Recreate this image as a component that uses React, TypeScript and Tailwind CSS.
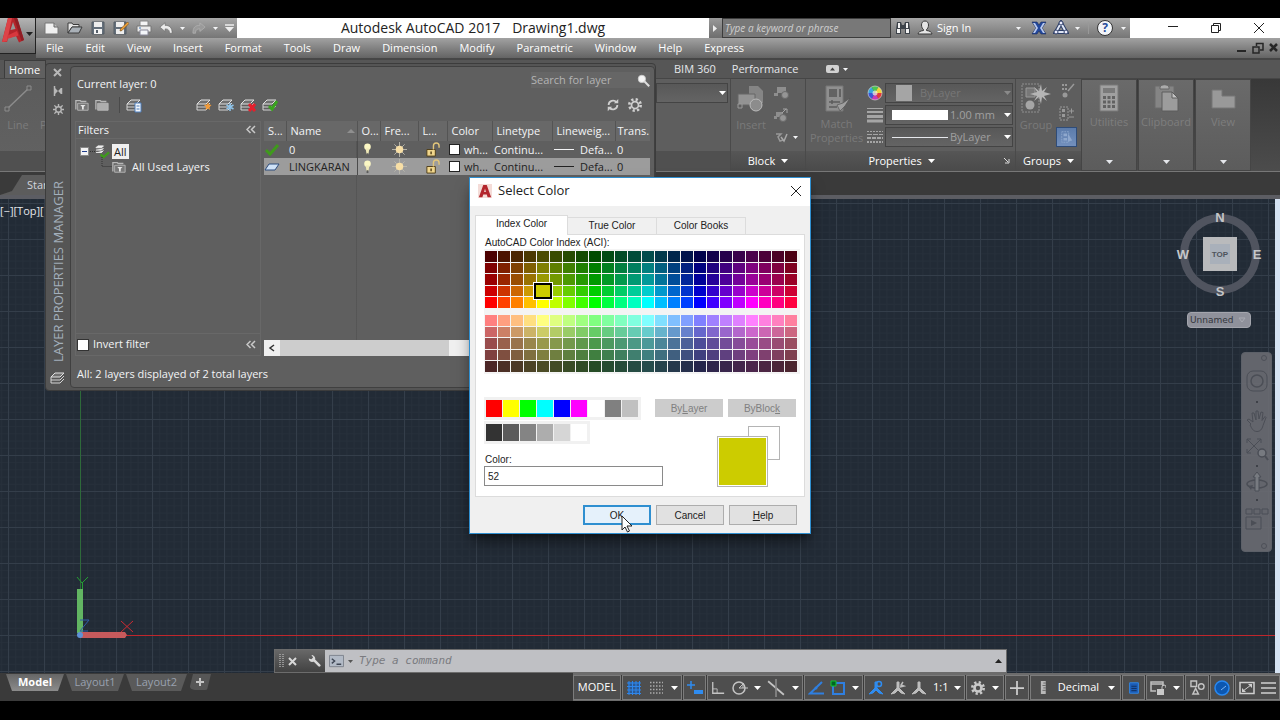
import { useState } from "react";
import type { ReactNode } from "react";
import clsx from "clsx";

const MENUS = [
	"File",
	"Edit",
	"View",
	"Insert",
	"Format",
	"Tools",
	"Draw",
	"Dimension",
	"Modify",
	"Parametric",
	"Window",
	"Help",
	"Express",
];

const LAYERS = [
	{ name: "0", current: true, color: "wh...", linetype: "Continu...", weight: "Defa...", trans: "0" },
	{ name: "LINGKARAN", current: false, color: "wh...", linetype: "Continu...", weight: "Defa...", trans: "0" },
];

const BASIC_COLORS = [
	"#ff0000",
	"#ffff00",
	"#00ff00",
	"#00ffff",
	"#0000ff",
	"#ff00ff",
	"#ffffff",
	"#808080",
	"#c0c0c0",
];

const GRAY_COLORS = ["#333333", "#5b5b5b", "#848484", "#adadad", "#d6d6d6", "#ffffff"];

// Brightness of each ACI shade, keyed by the last digit of the index
const SHADES = [255, 255, 204, 204, 153, 153, 127, 127, 76, 76];

// Color for an ACI index between 10 and 249. Odd indexes are the half saturated ones.
function aciColor(index: number) {
	const hue = (Math.floor(index / 10) - 1) * 15;
	const max = SHADES[index % 10];
	const min = index % 2 ? max / 2 : 0;
	const channel = (shift: number) => {
		const h = (hue + shift) % 360;
		let v = 0;
		if (h < 60 || h >= 300) v = 1;
		else if (h < 120) v = (120 - h) / 60;
		else if (h >= 240) v = (h - 240) / 60;
		return Math.round(min + (max - min) * v);
	};
	return `rgb(${channel(0)}, ${channel(240)}, ${channel(120)})`;
}

function Icon({
	size = 16,
	box = 16,
	className,
	children,
}: {
	size?: number;
	box?: number;
	className?: string;
	children: ReactNode;
}) {
	return (
		<svg
			width={size}
			height={size}
			viewBox={`0 0 ${box} ${box}`}
			fill="none"
			className={clsx("shrink-0", className)}
			aria-hidden="true"
		>
			{children}
		</svg>
	);
}

function Caret({ className = "text-white" }: { className?: string }) {
	return (
		<svg width="7" height="4" viewBox="0 0 7 4" className={clsx("shrink-0", className)} aria-hidden="true">
			<path d="M0 0h7L3.5 4z" fill="currentColor" />
		</svg>
	);
}

function SmallCaret() {
	return (
		<svg width="5" height="3" viewBox="0 0 5 3" className="shrink-0 text-gray-100" aria-hidden="true">
			<path d="M0 0h5L2.5 3z" fill="currentColor" />
		</svg>
	);
}

/* ---------- title bar and menu ---------- */

function AppLogo() {
	return (
		<svg width="26" height="26" viewBox="0 0 26 26" aria-hidden="true">
			<path d="M2 24 8 0h9l7 22-5 2.500-3-6.500-8 2-1 4z" fill="#b5242b" />
			<path d="M2 24 8 0h4L7 23.500z" fill="#dd4348" />
			<path d="m10.500 12 2.500-8 2.500 7z" fill="#979797" />
			<path d="M7.500 17.500 17 13l1.500 4.500L7 21z" fill="#d8383e" />
			<path d="m14 0 3.500.5L24 22l-2.500 1z" fill="#8f1d24" />
		</svg>
	);
}

function QuickAccess() {
	return (
		<div className="flex w-[201px] shrink-0 items-center gap-[7px] bg-linear-to-b from-[#a6a6a6] to-[#767676] pl-2">
			<button type="button" aria-label="New">
				<Icon>
					<path d="M1 3h9l4 4v7H1z" fill="#f0f0f0" stroke="#777" />
					<path d="M10 3v4h4" fill="#bbb" stroke="#666" />
				</Icon>
			</button>
			<button type="button" aria-label="Open">
				<Icon>
					<path d="M1 3h4l1 1.500h6V7H5l-4 6z" fill="#e5e5e5" stroke="#3c3c3c" />
					<path d="M5 7h10l-3 6H1z" fill="#a9b0b7" stroke="#3c3c3c" />
				</Icon>
			</button>
			<button type="button" aria-label="Save">
				<Icon>
					<path d="M2 2h12v12H2z" fill="#65707c" stroke="#555c65" />
					<path d="M4 2h8v5H4z" fill="#eee" />
					<path d="M4 9h8v5H4z" fill="#f4f4f4" />
					<path d="M6 10h2v3H6z" fill="#56606b" />
				</Icon>
			</button>
			<button type="button" aria-label="Save as">
				<Icon>
					<path d="M1 2h12v12H1z" fill="#65707c" stroke="#555c65" />
					<path d="M3 2h8v5H3zM3 9h8v5H3z" fill="#eee" />
					<path d="m14.500 2-7 7-.5 2 2-.5 7-7z" fill="#f2a33a" stroke="#6b430f" strokeWidth=".6" />
				</Icon>
			</button>
			<button type="button" aria-label="Plot">
				<Icon>
					<path d="M4 1h8v5H4z" fill="#f5f5f5" stroke="#888" />
					<path d="M1 6h14v6H1z" fill="#ececec" stroke="#777" />
					<path d="M4 10h8v5H4z" fill="#f3f6fa" stroke="#889" />
					<path d="M3 8h2" stroke="#3f74b5" />
				</Icon>
			</button>
			<button type="button" aria-label="Undo">
				<Icon size={14}>
					<path d="m1 7 6-5v3c5 0 8 2 8 9h-3c0-4-2-5-5-5v3z" fill="#ececec" stroke="#666" strokeWidth=".7" />
				</Icon>
			</button>
			<SmallCaret />
			<button type="button" aria-label="Redo">
				<Icon size={14}>
					<path d="M15 7 9 2v3C4 5 1 7 1 14h3c0-4 2-5 5-5v3z" fill="#9a9a9a" stroke="#b8b8b8" strokeWidth=".7" />
				</Icon>
			</button>
			<SmallCaret />
			<button type="button" aria-label="Customize toolbar">
				<Icon size={9} box={9}>
					<path d="M0 1h9" stroke="#eee" strokeWidth="1.500" />
					<path d="M0 3h9L4.500 8z" fill="#eee" />
				</Icon>
			</button>
		</div>
	);
}

function InfoCenter() {
	return (
		<>
			<button
				type="button"
				aria-label="Collapse search"
				className="flex w-[13px] shrink-0 items-center justify-center bg-linear-to-b from-[#9a9a9a] to-[#6e6e6e]"
			>
				<Icon size={7} box={7}>
					<path d="M1 0v7l4-3.500z" fill="#eee" />
				</Icon>
			</button>
			<input
				type="text"
				aria-label="Search"
				placeholder="Type a keyword or phrase"
				className="w-[169px] shrink-0 border border-[#3c3c3c] bg-[#787878] px-0.5 text-[10px] italic text-white placeholder:text-[#cfcfcf]"
			/>
			<div className="flex w-[239px] shrink-0 items-center bg-linear-to-b from-[#a6a6a6] to-[#767676] px-1 text-[11px] text-white">
				<button type="button" aria-label="Find">
					<Icon>
						<path d="M2 2h4l1 3h2l1-3h4l1 8v4h-5v-5H6v5H1v-4z" fill="#3d434a" />
						<path d="M2 9h3v4H2zM11 9h3v4h-3zM3 3h2v5H3zM11 3h2v5h-2z" fill="#f2f2f2" />
					</Icon>
				</button>
				<button type="button" className="ml-1.5 flex items-center gap-1">
					<Icon>
						<path
							d="M8 1c2.500 0 3.500 2 3.500 4S10.500 9 9.500 9.500v1c3 .5 5 1 5.500 3.500H1c.5-2.500 2.500-3 5.500-3.500v-1C5.500 9 4.500 7 4.500 5S5.500 1 8 1z"
							fill="#e6e6e6"
							stroke="#3a3a3a"
						/>
					</Icon>
					Sign In
				</button>
				<span className="ml-auto">
					<SmallCaret />
				</span>
				<button type="button" aria-label="Exchange apps" className="ml-2.5">
					<Icon>
						<path d="M1 2h5l2 3 2-3h5l-4 6 4 6h-5l-2-3-2 3H1l4-6z" fill="#22479c" stroke="#1b2d5c" strokeWidth=".6" />
						<path d="m2 3 3 5-3 5h2l3-5-3-5zM12 3l-3 5 3 5h2l-3-5 3-5z" fill="#b9c9ee" />
					</Icon>
				</button>
				<button type="button" aria-label="Autodesk 360" className="mx-1.5">
					<Icon>
						<path d="m8 3 5 9H3z" stroke="#2c3d66" strokeWidth="4" />
						<path d="m8 3 5 9H3z" stroke="#dfe6f5" strokeWidth="2" />
						<circle cx="8" cy="3" r="2" fill="#eef" stroke="#2c3d66" />
						<circle cx="3" cy="12" r="2" fill="#eef" stroke="#2c3d66" />
						<circle cx="13" cy="12" r="2" fill="#eef" stroke="#2c3d66" />
					</Icon>
				</button>
				<SmallCaret />
				<span className="mx-2 h-3 w-px bg-[#999]" />
				<button
					type="button"
					aria-label="Help"
					className="mr-2 flex size-4 items-center justify-center rounded-full border border-[#333] bg-[#f2f4f8] text-[12px] font-bold leading-none text-[#274b9b]"
				>
					?
				</button>
				<SmallCaret />
			</div>
		</>
	);
}

function WindowControls() {
	return (
		<div className="flex w-[150px] shrink-0 justify-end bg-white text-[#222]">
			<button type="button" aria-label="Minimize" className="flex w-[43px] items-center justify-center">
				<Icon size={12} box={12}>
					<path d="M1 4.500h10" stroke="currentColor" />
				</Icon>
			</button>
			<button type="button" aria-label="Restore" className="flex w-[43px] items-center justify-center">
				<Icon size={12} box={12}>
					<path d="M1.500 3.500h7v7h-7zM3.500 3V1.500h7v7H9" stroke="currentColor" />
				</Icon>
			</button>
			<button type="button" aria-label="Close" className="flex w-[43px] items-center justify-center">
				<Icon size={12} box={12}>
					<path d="m1 1 10 10M11 1 1 11" stroke="currentColor" />
				</Icon>
			</button>
		</div>
	);
}

function Header() {
	return (
		<header className="flex h-[42px] shrink-0 bg-[#4a4a4a]">
			<button
				type="button"
				aria-label="Application menu"
				className="flex h-9 w-9 shrink-0 items-start border-b border-r border-[#222] bg-linear-to-b from-[#b4b4b4] to-[#686868]"
			>
				<AppLogo />
				<span className="mt-3.5">
					<Caret className="text-[#222]" />
				</span>
			</button>
			<div className="flex min-w-0 flex-1 flex-col">
				<div className="flex h-5 items-stretch">
					<QuickAccess />
					<h1 className="flex flex-1 items-center justify-center gap-3 bg-white text-[14px] leading-5 text-[#222]">
						<span>Autodesk AutoCAD 2017</span>
						<span>Drawing1.dwg</span>
					</h1>
					<InfoCenter />
					<WindowControls />
				</div>
				<nav className="flex h-[22px] items-center gap-[22px] border-b-2 border-[#464646] bg-linear-to-b from-[#a2a2a2] to-[#646464] pl-2.5 text-[11px] text-white">
					{MENUS.map((menu) => (
						<button key={menu} type="button">
							{menu}
						</button>
					))}
					<span className="ml-auto flex items-center gap-1 text-[#262626]">
						<button type="button" aria-label="Minimize drawing">
							<Icon size={12} box={12}>
								<path d="M1 9h9" stroke="currentColor" strokeWidth="2" />
							</Icon>
						</button>
						<button type="button" aria-label="Restore drawing">
							<Icon size={12} box={12}>
								<path d="M1 5h6v6H1zM4.500 4V1.500H11V8H8" stroke="currentColor" strokeWidth="1.500" />
							</Icon>
						</button>
						<button type="button" aria-label="Close drawing">
							<Icon size={12} box={12}>
								<path d="m2 2 7 7M9 2 2 9" stroke="currentColor" strokeWidth="2.500" />
							</Icon>
						</button>
					</span>
				</nav>
			</div>
		</header>
	);
}

/* ---------- ribbon ---------- */

function PanelTitle({ children, launcher = false }: { children?: ReactNode; launcher?: boolean }) {
	return (
		<div className="flex h-5 items-center justify-center gap-1.5 bg-linear-to-b from-[#565656] to-[#4a4a4a] text-[11px] text-white">
			<span className={clsx("flex items-center gap-1.5", launcher && "mx-auto")}>
				{children}
				<Caret />
			</span>
			{launcher && (
				<Icon size={8} box={8} className="mr-1">
					<path d="m1 1 4 4M6 2v4H2" stroke="#ddd" />
				</Icon>
			)}
		</div>
	);
}

function Combo({ label, value, dim, children }: { label: string; value: string; dim?: boolean; children: ReactNode }) {
	return (
		<div className="flex h-5 w-full items-center border border-[#444] bg-linear-to-b from-[#585858] to-[#646464] pl-1.5 pr-px">
			{children}
			<select
				aria-label={label}
				defaultValue={value}
				className={clsx(
					"min-w-0 flex-1 appearance-none bg-transparent text-[11px] leading-4",
					dim ? "text-[#777]" : "text-[#a0a0a0]",
				)}
			>
				<option>{value}</option>
			</select>
			<Caret className={dim ? "text-[#8a8a8a]" : "text-white"} />
		</div>
	);
}

function CollapsedPanel({ title, children }: { title: string; children: ReactNode }) {
	return (
		<button
			type="button"
			className="mr-px flex w-14 flex-col items-center border border-[#454545] bg-linear-to-b from-[#6a6a6a] to-[#5c5c5c] pt-1 text-[11px] text-[#7e7e7e]"
		>
			{children}
			<span className="mt-0.5 leading-4">{title}</span>
			<span className="mt-auto pb-1.5">
				<Caret className="text-gray-200" />
			</span>
		</button>
	);
}

function ColorWheel() {
	const parts = ["#e23b3b", "#c83bb8", "#3b57d8", "#38a8e0", "#4cc552", "#f0d63c"];
	return (
		<Icon>
			{parts.map((fill, i) => (
				<path key={fill} d="M8 8 15 8A7 7 0 0 1 11.500 14.060z" fill={fill} transform={`rotate(${i * 60} 8 8)`} />
			))}
			<circle cx="8" cy="8" r="2.500" fill="#f6f1e6" opacity=".7" />
			<circle cx="8" cy="8" r="7" stroke="#ddd" strokeWidth=".6" />
		</Icon>
	);
}

function Ribbon() {
	return (
		<section aria-label="Ribbon" className="shrink-0 bg-[#565656]">
			<div className="flex h-[18px] items-center text-[11px] text-gray-200">
				<button
					type="button"
					className="ml-1 h-full w-[42px] shrink-0 border border-b-0 border-[#3c3c3c] bg-[#606060] pl-1 text-left leading-4 text-white"
				>
					Home
				</button>
				<span className="w-[628px] shrink-0" />
				<button type="button">BIM 360</button>
				<button type="button" className="ml-4">
					Performance
				</button>
				<button type="button" aria-label="Minimize ribbon" className="ml-7 flex items-center gap-1">
					<svg width="13" height="8" viewBox="0 0 13 8" aria-hidden="true">
						<rect width="13" height="8" rx="2" fill="#d2d2d2" />
						<path d="M4 5.500h5L6.500 2.500z" fill="#444" />
					</svg>
					<SmallCaret />
				</button>
			</div>
			<div className="flex h-[94px] border-b border-t border-b-[#777] border-t-[#464646] bg-linear-to-b from-[#383838] to-[#4c4c4c]">
				<div className="flex w-[656px] shrink-0 flex-col justify-between bg-linear-to-b from-[#5c5c5c] to-[#626262] text-[11px] text-[#7c7c7c]">
					<div className="flex gap-2 pl-1 pt-1.5">
						<div className="flex w-7 flex-col items-center">
							<Icon size={28} box={28}>
								<path d="M3 24 25 3" stroke="#8c8c8c" strokeWidth="1.500" />
								<path d="M1 22h4v4H1zM23 1h4v4h-4z" fill="#5c5c5c" stroke="#8c8c8c" />
							</Icon>
							<span className="mt-1 leading-4">Line</span>
						</div>
						<span className="mt-8 leading-4">Polyline</span>
					</div>
					<div className="h-5 bg-[#505050]" />
				</div>
				<div className="flex w-[75px] shrink-0 flex-col justify-between border-r border-[#4a4a4a] bg-[#5e5e5e]">
					<div className="pr-0.5 pt-1">
						<Combo label="Layer" value="">
							<span />
						</Combo>
					</div>
					<div className="h-5 bg-[#505050]" />
				</div>
				<div className="flex w-[75px] shrink-0 flex-col justify-between border-r border-[#4a4a4a] bg-[#5e5e5e] text-[11px] text-[#7a7a7a]">
					<div className="flex gap-2 pl-1.5 pt-1.5">
						<div className="flex w-7 flex-col items-center">
							<Icon size={28} box={28}>
								<path d="M12 1h9l5 5v12H12z" fill="#858585" />
								<path d="M1 9h17v11H1z" fill="#939393" stroke="#666" />
								<circle cx="19" cy="20" r="6" fill="#8c8c8c" stroke="#bbb" />
								<path d="M1 19h4v4H1z" fill="#5e5e5e" stroke="#999" />
							</Icon>
							<span className="mt-1 leading-4">Insert</span>
						</div>
						<div className="flex flex-col gap-1.5">
							<Icon>
								<path d="M4 2h9v6H4z" fill="#8e8e8e" />
								<circle cx="12" cy="10" r="3.500" fill="#959595" stroke="#6a6a6a" />
								<path d="M1 8h4v3H1z" fill="#8e8e8e" />
							</Icon>
							<Icon>
								<path d="M3 5h7v5H3z" fill="#8e8e8e" />
								<circle cx="10" cy="11" r="3.500" fill="#959595" stroke="#6a6a6a" />
								<path d="m9 6 4-4M10 2h4v4" stroke="#a5a5a5" />
								<path d="M1 9h3v3H1z" fill="#8e8e8e" />
							</Icon>
							<div className="flex items-center gap-1">
								<Icon>
									<path d="M3 5h5L5 8l2 4 3-1" stroke="#999" strokeWidth="1.500" />
									<path d="m8 8 3 4 3-7" stroke="#a8a8a8" strokeWidth="1.500" />
								</Icon>
								<SmallCaret />
							</div>
						</div>
					</div>
					<PanelTitle>Block</PanelTitle>
				</div>
				<div className="flex w-[210px] shrink-0 flex-col justify-between border-r border-[#4a4a4a] bg-[#5e5e5e] text-[11px] text-[#7a7a7a]">
					<div className="flex gap-1 pl-1 pr-0.5 pt-1">
						<div className="flex w-[53px] shrink-0 flex-col items-center pt-0.5 text-center">
							<Icon size={28} box={28}>
								<path d="M3 1h17v25H3z" fill="#8f8f8f" stroke="#777" />
								<path d="M6 4h8v8H6z" fill="#636363" />
								<path d="M16 4h2v8h-2z" fill="#636363" />
								<path d="M6 17h11M6 22h8M9 15v4" stroke="#5c5c5c" strokeWidth="1.500" />
								<path d="m14 20 6-2 7-5-5 8-5 5z" fill="#a0a0a0" stroke="#555" strokeWidth=".7" />
							</Icon>
							<span className="mt-1 leading-[14px]">
								Match
								<br />
								Properties
							</span>
						</div>
						<div className="grid min-w-0 flex-1 grid-cols-[16px_1fr] items-center gap-x-0.5 gap-y-0.5">
							<ColorWheel />
							<Combo label="Object color" value="ByLayer" dim>
								<span className="ml-1 mr-2 size-4 bg-[#a5a5a5]" />
							</Combo>
							<Icon>
								<path d="M0 1.500h16" stroke="#a5a5a5" />
								<path d="M0 5h16" stroke="#a5a5a5" strokeWidth="2" />
								<path d="M0 9.500h16" stroke="#a5a5a5" strokeWidth="3" />
								<path d="M0 14h16" stroke="#a5a5a5" strokeWidth="3" />
							</Icon>
							<Combo label="Lineweight" value="1.00 mm">
								<span className="mr-0.5 h-2.5 w-14 bg-white" />
							</Combo>
							<Icon>
								<path d="M0 2.500h16" stroke="#a5a5a5" strokeDasharray="2 1" />
								<path d="M0 5.500h16" stroke="#a5a5a5" strokeDasharray="5 1" />
								<path d="M0 9h16" stroke="#a5a5a5" strokeWidth="2" strokeDasharray="4 1" />
								<path d="M0 13h16" stroke="#a5a5a5" strokeWidth="2" strokeDasharray="2 1" />
							</Icon>
							<Combo label="Linetype" value="ByLayer">
								<span className="mr-0.5 h-px w-14 bg-gray-200" />
							</Combo>
						</div>
					</div>
					<PanelTitle launcher>Properties</PanelTitle>
				</div>
				<div className="flex w-[65px] shrink-0 flex-col justify-between bg-[#5e5e5e] text-[11px] text-[#7a7a7a]">
					<div className="flex justify-between px-1 pt-1">
						<div className="flex w-8 flex-col items-center">
							<Icon size={30} box={30}>
								<path d="M1 1h17v28H1z" stroke="#8f8f8f" strokeDasharray="2 1" />
								<path d="M5 5h9v9H5z" fill="#777" stroke="#999" />
								<circle cx="9" cy="22" r="4.500" fill="#a5a5a5" />
								<path
									d="m20 1 1 7 5-4-3 5 7 2-7 2 3 5-5-4-1 7-2-7-5 4 3-5-7-2 7-2-3-5 5 4z"
									fill="#b5b5b5"
								/>
							</Icon>
							<span className="mt-1 leading-4">Group</span>
						</div>
						<div className="flex flex-col items-center gap-1.5">
							<Icon>
								<path d="M3 2h5M3 6h5" stroke="#999" strokeWidth="2" strokeDasharray="2 1" />
								<path d="m9 8 6-7" stroke="#999" strokeWidth="1.500" />
								<circle cx="6" cy="12" r="2.500" fill="#999" />
							</Icon>
							<Icon>
								<path d="M1 2h8v13H1z" stroke="#999" strokeDasharray="2 1" />
								<path d="M3 4h3v3H3zM3 9h3v3H3z" fill="#999" />
								<path d="M10 6h5M12.500 3.500v5M10 12h5" stroke="#999" />
							</Icon>
							<button
								type="button"
								aria-label="Group selection"
								className="flex h-5 w-[21px] items-center justify-center border border-[#2f4c78] bg-linear-to-b from-[#5c7cab] to-[#7390bd]"
							>
								<Icon size={14}>
									<path d="M2 2h8v12H2z" stroke="#8fa8cd" strokeDasharray="2 1" />
									<path d="M4 4h4v3H4zM4 9h4v3H4z" fill="#8fa8cd" />
									<path d="m9 4 5 8-5 1z" fill="#8fa8cd" />
								</Icon>
							</button>
						</div>
					</div>
					<PanelTitle>Groups</PanelTitle>
				</div>
				<CollapsedPanel title="Utilities">
					<Icon size={28} box={28}>
						<path d="M5 1h18v26H5z" fill="#a0a0a0" stroke="#787878" />
						<path d="M8 4h12v5H8z" fill="#7a7a7a" />
						<path
							d="M8 12h3v3H8zM12.500 12h3v3h-3zM17 12h3v3h-3zM8 16.500h3v3H8zM12.500 16.500h3v3h-3zM17 16.500h3v3h-3zM8 21h3v3H8zM12.500 21h3v3h-3zM17 21h3v3h-3z"
							fill="#626262"
						/>
					</Icon>
				</CollapsedPanel>
				<CollapsedPanel title="Clipboard">
					<Icon size={28} box={28}>
						<path d="M3 2h19v22H3z" fill="#858585" stroke="#6c6c6c" />
						<path d="M8 3c1-3 8-3 9 0v2H8z" fill="#ababab" stroke="#666" />
						<path d="M10 8h10l6 6v13H10z" fill="#9c9c9c" stroke="#5c5c5c" />
						<path d="M20 8v6h6z" fill="#c2c2c2" stroke="#5c5c5c" />
					</Icon>
				</CollapsedPanel>
				<CollapsedPanel title="View">
					<Icon size={28} box={28}>
						<path d="M3 6h10v6h13v12H3z" fill="#999" stroke="#777" />
					</Icon>
				</CollapsedPanel>
			</div>
			<div className="flex h-[23px] items-end bg-[#3a3a3a]">
				<button
					type="button"
					className="h-5 w-32 bg-[#5c5c5c] pl-[27px] text-left text-[11px] text-gray-300 [clip-path:polygon(22px_0,100%_0,100%_100%,0_100%,12px_80%)]"
				>
					Start
				</button>
			</div>
			<div className="h-1 bg-[#5c5d63]" />
		</section>
	);
}

/* ---------- drawing area ---------- */

function ViewCube() {
	return (
		<svg
			width="90"
			height="90"
			viewBox="0 0 90 90"
			className="absolute right-2.5 top-2.5 font-['Liberation_Sans'] font-bold"
			role="img"
			aria-label="View cube"
		>
			<circle cx="45" cy="45" r="36" fill="none" stroke="#50545f" strokeWidth="8" />
			<path d="M28 28h34v34H28z" fill="#b9babc" />
			<path d="M35 35h20v20H35z" fill="#a9b0ba" />
			<g textAnchor="middle" fill="#c4c6c9" fontSize="13">
				<text x="45" y="13">
					N
				</text>
				<text x="45" y="87">
					S
				</text>
				<text x="8" y="50">
					W
				</text>
				<text x="82" y="50">
					E
				</text>
			</g>
			<text x="45" y="48" textAnchor="middle" fontSize="8" fill="#4d535c">
				TOP
			</text>
		</svg>
	);
}

function NavBar() {
	return (
		<div className="absolute right-[3px] top-[153px] flex h-[200px] w-[31px] flex-col items-center rounded-sm border border-[#5c6068] bg-[#6a6c72]/90 pt-4">
			<span className="absolute right-1 top-0.5 size-1.5 rounded-full border border-[#4d5058]" />
			<button type="button" aria-label="Steering wheel">
				<Icon size={24} box={24}>
					<path d="M8 2h8a6 6 0 0 1 6 6v8a6 6 0 0 1-6 6H8a6 6 0 0 1-6-6V8a6 6 0 0 1 6-6z" stroke="#4b4e56" />
					<circle cx="12" cy="12" r="6" stroke="#4b4e56" strokeWidth="1.500" />
				</Icon>
			</button>
			<span className="mt-2 size-0.5 bg-[#3e4148]" />
			<button type="button" aria-label="Pan" className="mt-1.5">
				<Icon size={24} box={24}>
					<path
						d="M6 15 2 11l2-1 4 3-1-9 2 0 2 7V2h2l1 8 2-7 2 .5-1 8 3-4 1 1-3 8c-1 4-3 6-6 6-4 0-5-3-7-6.500z"
						stroke="#4b4e56"
					/>
				</Icon>
			</button>
			<button type="button" aria-label="Zoom extents" className="mt-1">
				<Icon size={24} box={24}>
					<path d="M2 2 16 16M16 2 2 16M2 6V2h4M12 2h4v4M2 12v4h4" stroke="#4b4e56" />
					<circle cx="17" cy="16" r="4" fill="#777a80" stroke="#4b4e56" strokeWidth="1.500" />
					<path d="m20 19 3 4" stroke="#4b4e56" strokeWidth="2" />
				</Icon>
			</button>
			<span className="mt-1 size-0.5 bg-[#3e4148]" />
			<button type="button" aria-label="Orbit" className="mt-1">
				<Icon size={24} box={24}>
					<ellipse cx="12" cy="13" rx="10" ry="4" stroke="#4b4e56" strokeWidth="1.500" />
					<path d="M10 20V6H8l4-5 4 5h-2v14z" fill="#777a80" stroke="#4b4e56" />
					<path d="m8 14-5 1 3 4z" fill="#4b4e56" />
				</Icon>
			</button>
			<span className="mt-1 size-0.5 bg-[#3e4148]" />
			<button type="button" aria-label="Show motion" className="mt-1.5">
				<Icon size={24} box={24}>
					<path d="M1 2h6v5H1zM9 2h6v5H9zM17 2h6v5h-6zM1 10h15v12H1z" stroke="#4b4e56" />
					<path d="m6 13 6 3-6 3z" fill="#4b4e56" />
				</Icon>
			</button>
			<span className="absolute bottom-0.5 right-1 size-1.5 rounded-full border border-[#4d5058]" />
		</div>
	);
}

function CommandLine() {
	return (
		<div className="absolute bottom-0 left-[274px] right-[268px] flex h-6 border border-[#6c6c6c]">
			<div className="flex w-[50px] shrink-0 items-center gap-1 bg-linear-to-b from-[#686868] to-[#424242] pl-1">
				<svg width="5" height="14" viewBox="0 0 5 14" aria-hidden="true">
					<path d="M1 0v14M4 0v14" stroke="#aaa" strokeDasharray="1 1" strokeWidth="1.500" />
				</svg>
				<button type="button" aria-label="Close command line">
					<Icon size={9} box={9}>
						<path d="m1 1 7 7M8 1 1 8" stroke="#d8d8d8" strokeWidth="2" />
					</Icon>
				</button>
				<button type="button" aria-label="Customize" className="ml-1.5">
					<Icon size={14}>
						<path d="m8 7 6 6" stroke="#d8d8d8" strokeWidth="3" strokeLinecap="round" />
						<path d="M2 5c0 3 3 5 6 3.500L9 7c1.500-3-1-6-4-6l2 3-2 2z" fill="#d8d8d8" />
					</Icon>
				</button>
			</div>
			<div className="flex flex-1 items-center gap-1 bg-[#bfc0c4] px-1">
				<Icon size={15}>
					<path d="M.5 1.500h15v12H.5z" fill="#b2bac6" stroke="#7d828c" />
					<path d="m3 5 3 2.500L3 10M8 11h5" stroke="#3e4654" strokeWidth="1.500" />
				</Icon>
				<Icon size={5} box={5}>
					<path d="M0 1h5L2.500 4z" fill="#555" />
				</Icon>
				<input
					type="text"
					aria-label="Command"
					placeholder="Type a command"
					className="ml-0.5 min-w-0 flex-1 bg-transparent font-['DejaVu_Sans_Mono'] text-[11px] italic text-black placeholder:text-[#7a7b80]"
				/>
				<Icon size={7} box={7}>
					<path d="M0 5h7L3.500 1z" fill="#222" />
				</Icon>
			</div>
		</div>
	);
}

function DrawingArea() {
	return (
		<main className="flex min-h-0 flex-1">
			<div className="relative min-w-0 flex-1 overflow-hidden bg-[#222b36]">
				<svg className="absolute inset-0 size-full" aria-hidden="true">
					<defs>
						<pattern id="minor" x="80" y="436" width="7.200" height="7.200" patternUnits="userSpaceOnUse">
							<path d="M0 .5h7.200M.5 0v7.200" stroke="#27303b" />
						</pattern>
						<pattern id="major" x="80" y="436" width="36" height="36" patternUnits="userSpaceOnUse">
							<path d="M0 .5h36M.5 0v36" stroke="#343e4a" />
						</pattern>
					</defs>
					<rect width="100%" height="100%" fill="url(#minor)" />
					<rect width="100%" height="100%" fill="url(#major)" />
					<line x1="80.500" y1="0" x2="80.500" y2="390" stroke="#2e6a3a" />
					<line x1="80" y1="436.500" x2="100%" y2="436.500" stroke="#c0262c" />
					<path d="M77 390h6v44h-6z" fill="#62b562" />
					<path d="M80 433h45l2 3-2 3H80z" fill="#c65a5c" />
					<path d="m77 378 5 6 6-6M82.500 384v6" stroke="#23a033" fill="none" />
					<path d="m121 422 12 11M133 422l-12 11" stroke="#cc2a32" fill="none" />
					<path d="M80 421h9l-9 11h8" stroke="#2f5da8" fill="none" />
					<circle cx="80" cy="436" r="3" fill="#5f92d6" />
				</svg>
				<span className="absolute left-0 top-1 text-[11px] leading-4 text-gray-200">[−][Top][</span>
				<ViewCube />
				<div className="absolute right-6 top-[113px] flex h-4 w-16 items-center rounded-sm border border-[#a3a5ad] bg-[#8f919b] pl-0.5 pr-1">
					<select
						aria-label="Coordinate system"
						className="min-w-0 flex-1 appearance-none bg-transparent font-['DejaVu_Sans'] text-[9px] leading-[14px] text-[#33363d]"
					>
						<option>Unnamed</option>
					</select>
					<Icon size={8} box={8}>
						<path d="M1 2h6L4 6z" stroke="#a9abb3" />
					</Icon>
				</div>
				<NavBar />
				<CommandLine />
			</div>
			<div className="w-[5px] shrink-0 bg-[#d5e3f3]" />
		</main>
	);
}

/* ---------- status bar ---------- */

function StatusGroup({ className, children }: { className: string; children: ReactNode }) {
	return (
		<div className={clsx("flex shrink-0 items-center justify-around border border-[#7c7c7c] bg-[#4e4e4e]", className)}>
			{children}
		</div>
	);
}

function PersonIcon({ color, mark }: { color: string; mark?: ReactNode }) {
	return (
		<Icon>
			<path d="M7 2h2v6l6 6-4-1-3-3-3 3-4 1 6-6z" fill={color} stroke={color} />
			{mark}
		</Icon>
	);
}

function GearIcon({ color, hollow }: { color: string; hollow?: boolean }) {
	return (
		<Icon size={14}>
			<circle cx="8" cy="8" r="6.500" stroke={color} strokeWidth="3" strokeDasharray="2.550 2.550" />
			<circle cx="8" cy="8" r="4" stroke={color} strokeWidth={hollow ? 2 : 3} />
		</Icon>
	);
}

function StatusBar() {
	return (
		<footer className="flex h-7 shrink-0 bg-[#3a3a3a]">
			<div className="flex items-start gap-0.5 pl-1.5 pt-px text-[11px] leading-4 text-gray-400">
				<button
					type="button"
					className="w-[58px] rounded-b-md bg-linear-to-b from-[#666] to-[#8c8c8c] pb-px font-bold text-white [clip-path:polygon(0_0,100%_0,52px_100%,6px_100%)]"
				>
					Model
				</button>
				<button
					type="button"
					className="w-[58px] rounded-b-md bg-[#5a5a5a] pb-px [clip-path:polygon(0_0,100%_0,52px_100%,6px_100%)]"
				>
					Layout1
				</button>
				<button
					type="button"
					className="w-[61px] rounded-b-md bg-[#5a5a5a] pb-px [clip-path:polygon(0_0,100%_0,55px_100%,6px_100%)]"
				>
					Layout2
				</button>
				<button
					type="button"
					aria-label="New layout"
					className="flex h-4 w-[22px] items-center justify-center rounded-b-md bg-[#565656] [clip-path:polygon(4px_0,100%_0,18px_100%,0_100%)]"
				>
					<Icon size={8} box={8}>
						<path d="M4 0v8M0 4h8" stroke="#c4c4c4" strokeWidth="2" />
					</Icon>
				</button>
			</div>
			<div className="ml-auto flex gap-px border-b border-t-2 border-[#6c6c6c] text-[11px] text-white">
				<StatusGroup className="w-12">MODEL</StatusGroup>
				<StatusGroup className="w-[60px]">
					<Icon>
						<path d="M2 2h12v12H2z" fill="#2a5a96" />
						<path d="M3 1v14M6.500 1v14M10 1v14M13.500 1v14M1 3h14M1 6.500h14M1 10h14M1 13.500h14" stroke="#2f86ea" />
					</Icon>
					<Icon>
						<path
							d="M2 2.500h13M2 6h13M2 9.500h13M2 13h13"
							stroke="#aaa"
							strokeWidth="1.500"
							strokeDasharray="1.500 1.500"
						/>
					</Icon>
					<Caret />
				</StatusGroup>
				<StatusGroup className="w-[23px]">
					<Icon>
						<path d="M4 1v8M0 5h8" stroke="#2f8cf0" strokeWidth="1.500" />
						<path d="M7 10h9v4H7z" fill="#2f8cf0" />
					</Icon>
				</StatusGroup>
				<StatusGroup className="w-24">
					<Icon size={14}>
						<path d="M2 1v13h13" stroke="#c4c4c4" strokeWidth="1.500" />
						<path d="M2 9h5v5" stroke="#c4c4c4" />
					</Icon>
					<Icon>
						<circle cx="7" cy="8" r="6" stroke="#c4c4c4" strokeWidth="1.500" />
						<path d="M7 8h9M7 8l5-5M11 5v3" stroke="#c4c4c4" />
					</Icon>
					<Caret />
					<Icon size={18}>
						<path d="m1 2 14 12" stroke="#c4c4c4" strokeWidth="1.500" />
						<path d="M8 0v16" stroke="#888" strokeWidth="1.500" />
					</Icon>
					<Caret />
				</StatusGroup>
				<StatusGroup className="w-[59px]">
					<Icon>
						<path d="M14 2 2 13.500h14" stroke="#2f7fe0" strokeWidth="2" />
						<circle cx="8" cy="8" r="1.500" fill="#2f7fe0" />
					</Icon>
					<Icon>
						<path d="M3 3h11v11H3z" stroke="#2f7fe0" strokeWidth="2" />
						<path d="M1 1h5v5H1z" fill="#062" stroke="#16c432" />
					</Icon>
					<Caret />
				</StatusGroup>
				<StatusGroup className="w-[101px]">
					<PersonIcon color="#2f8cf0" mark={<circle cx="11" cy="4" r="2.500" stroke="#2f8cf0" strokeWidth="1.500" />} />
					<PersonIcon color="#bdbdbd" mark={<path d="m10 7 4-1-3-1 2-3" stroke="#bdbdbd" strokeWidth="1.500" />} />
					<PersonIcon color="#bdbdbd" />
					<span>1:1</span>
					<Caret />
				</StatusGroup>
				<StatusGroup className="w-[38px]">
					<GearIcon color="#c9c9c9" />
					<Caret />
				</StatusGroup>
				<StatusGroup className="w-6">
					<Icon size={14}>
						<path d="M8 0v16M0 8h16" stroke="#cfcfcf" strokeWidth="2" />
					</Icon>
				</StatusGroup>
				<StatusGroup className="w-[91px]">
					<Icon size={13}>
						<path d="M6 0h6v16H6z" fill="#b9b9b9" />
						<path d="M9 2.500h3M8 5.500h4M9 8.500h3M8 11.500h4" stroke="#555" />
					</Icon>
					<span>Decimal</span>
					<Caret />
				</StatusGroup>
				<StatusGroup className="w-[23px]">
					<Icon size={14}>
						<path d="M3 2h10v12H3z" fill="#1c5cb4" stroke="#2f8cf0" />
						<path d="M5 6h6M5 8.500h6M5 11h6" stroke="#0f2c58" />
					</Icon>
				</StatusGroup>
				<StatusGroup className="w-[38px]">
					<Icon>
						<path d="M13 6V2H1v9h5M1 4h12" stroke="#c0c0c0" strokeWidth="1.500" />
						<path d="M7 9h7v6H7z" fill="#c9c9c9" />
						<path d="M12 9V7a2 2 0 0 1 4 0v1" stroke="#c9c9c9" />
					</Icon>
					<Caret />
				</StatusGroup>
				<StatusGroup className="w-6">
					<Icon size={15}>
						<path d="M1 1h6v6H1z" stroke="#c4c4c4" strokeWidth="1.500" />
						<circle cx="12" cy="7" r="3" stroke="#c4c4c4" strokeWidth="1.500" />
						<path d="m6 9 3 6H3z" stroke="#c4c4c4" strokeWidth="1.500" />
					</Icon>
				</StatusGroup>
				<StatusGroup className="w-6">
					<Icon>
						<circle cx="8" cy="8" r="7" fill="#0c57b0" stroke="#2788f2" strokeWidth="1.500" />
						<path d="m7 10 5-4" stroke="#7fb6f5" />
					</Icon>
				</StatusGroup>
				<StatusGroup className="w-[45px]">
					<Icon>
						<path d="M1 2.500h14v11H1z" stroke="#cfcfcf" strokeWidth="1.500" />
						<path d="M9 4h4v4zM7 12H3V8z" fill="#cfcfcf" />
						<path d="m4 11 8-6" stroke="#cfcfcf" />
					</Icon>
					<Icon>
						<path d="M1 3h15M1 8h15M1 13h15" stroke="#cfcfcf" strokeWidth="1.500" />
					</Icon>
				</StatusGroup>
			</div>
		</footer>
	);
}

/* ---------- layer properties palette ---------- */

function LayerStack({ mark }: { mark: ReactNode }) {
	return (
		<Icon>
			<path d="M5 3h9l-4 4H1z" fill="#707070" stroke="#e2e2e2" />
			<path d="M1 7v3h9l4-4M1 10v3h9l4-4" stroke="#d4d4d4" />
			{mark}
		</Icon>
	);
}

function FolderIcon({ filter }: { filter?: boolean }) {
	return (
		<Icon size={14}>
			<path d="M1 13V3h5l1 1h6" stroke="#b8b8b8" strokeWidth="1.500" />
			<path d="M3 6h12v8H3z" fill={filter ? "#777" : "#aeaeae"} stroke="#b8b8b8" />
			{filter && <path d="M6 8h6l-2 2v3H8v-3z" fill="#e6e6e6" />}
		</Icon>
	);
}

function DoubleChevron() {
	return (
		<Icon size={10} box={10}>
			<path d="M4.500 1 1 4.500 4.500 8M9 1 5.500 4.500 9 8" stroke="#c8c8c8" strokeWidth="1.500" />
		</Icon>
	);
}

const HEADER_CELL = "border-r border-[#545454] bg-[#686868] pl-1 text-left font-normal text-gray-100";

function LayerTable() {
	return (
		<table className="w-full table-fixed border-collapse text-[11px] text-gray-100">
			<colgroup>
				<col className="w-[22px]" />
				<col className="w-[71px]" />
				<col className="w-[23px]" />
				<col className="w-[38px]" />
				<col className="w-[29px]" />
				<col className="w-[45px]" />
				<col className="w-[60px]" />
				<col className="w-[63px]" />
				<col />
			</colgroup>
			<thead>
				<tr className="h-5 whitespace-nowrap">
					<th className={HEADER_CELL}>S...</th>
					<th className={HEADER_CELL}>
						<span className="flex items-center justify-between pr-0.5">
							Name
							<Icon size={8} box={8}>
								<path d="M0 6h8L4 2z" fill="#8f8f8f" />
							</Icon>
						</span>
					</th>
					<th className={HEADER_CELL}>O...</th>
					<th className={HEADER_CELL}>Fre...</th>
					<th className={HEADER_CELL}>L...</th>
					<th className={HEADER_CELL}>Color</th>
					<th className={HEADER_CELL}>Linetype</th>
					<th className={HEADER_CELL}>Lineweig...</th>
					<th className="bg-[#686868] pl-0.5 text-left font-normal">Trans.</th>
				</tr>
			</thead>
			<tbody>
				{LAYERS.map((layer) => (
					<tr
						key={layer.name}
						className={clsx("h-[17px] whitespace-nowrap leading-[17px]", !layer.current && "bg-[#9c9c9c] text-[#222]")}
					>
						<td>
							{layer.current ? (
								<Icon className="block">
									<path d="m2 8 4 4L14 3" stroke="#3f9a1c" strokeWidth="3" />
								</Icon>
							) : (
								<Icon className="block">
									<path d="M5 5h10l-4 6H1z" fill="#cfe2f7" stroke="#2d4c7c" />
								</Icon>
							)}
						</td>
						<td className="border-r border-[#4c4c4c] pl-[3px]">{layer.name}</td>
						<td>
							<Icon size={15} className="ml-0.5 block">
								<circle cx="8" cy="5" r="3.500" fill="#fbf7c4" />
								<path d="M6 7h4l-1 6H7z" fill="#efe9b8" />
								<path d="M7 12h2v3H7z" fill="#5c5c5c" />
							</Icon>
						</td>
						<td>
							<Icon size={15} className="mx-auto block">
								<path d="M8 0v16M0 8h16M2.500 2.500l11 11M13.500 2.500l-11 11" stroke="#b9b6ac" />
								<circle cx="8" cy="8" r="4" fill="#f8dfa6" />
							</Icon>
						</td>
						<td>
							<Icon size={15} className="mx-auto block">
								<path d="M2 8h9v7H2z" fill="#f1d68c" stroke="#4d3c18" />
								<path d="M9 8V4a3 3 0 0 1 6 0v2" stroke="#e3c67a" strokeWidth="1.500" />
								<path d="M6.500 10v3" stroke="#4d3c18" strokeWidth="1.500" />
							</Icon>
						</td>
						<td>
							<span className="flex items-center gap-1 pl-0.5">
								<span className="size-[11px] shrink-0 border border-[#222] bg-white" />
								{layer.color}
							</span>
						</td>
						<td className="pl-0.5">{layer.linetype}</td>
						<td>
							<span className="flex items-center gap-1.5 pl-0.5">
								<span className="h-px w-5 shrink-0 bg-current" />
								{layer.weight}
							</span>
						</td>
						<td className="pl-0.5">{layer.trans}</td>
					</tr>
				))}
			</tbody>
		</table>
	);
}

function LayerPalette() {
	return (
		<section
			aria-label="Layer properties manager"
			className="absolute left-[45px] top-[63px] flex h-[328px] w-[611px] rounded-sm border border-[#3c3c3c] bg-[#555]"
		>
			<div className="flex w-[24px] shrink-0 flex-col items-center gap-2 pb-1 pt-1">
				<button type="button" aria-label="Close palette">
					<Icon size={10} box={10}>
						<path d="m1 1 7 7M8 1 1 8" stroke="#b8b8b8" strokeWidth="2" />
					</Icon>
				</button>
				<button type="button" aria-label="Auto-hide">
					<Icon size={10} box={10}>
						<path d="M1.500 0v10M8.500 2v6" stroke="#b8b8b8" strokeWidth="1.500" />
						<path d="M2 2v6l3-3zM8 2v6L5 5z" fill="#b8b8b8" />
					</Icon>
				</button>
				<button type="button" aria-label="Palette properties">
					<Icon size={11}>
						<circle cx="8" cy="8" r="4" stroke="#b8b8b8" strokeWidth="2" />
						<path d="M8 0v4M8 12v4M0 8h4M12 8h4M2 2l3 3M11 11l3 3M14 2l-3 3M5 11l-3 3" stroke="#b8b8b8" strokeWidth="2" />
					</Icon>
				</button>
				<h2 className="mt-auto rotate-180 text-[13px] leading-4 text-[#a3afbb] [writing-mode:vertical-rl]">
					LAYER PROPERTIES MANAGER
				</h2>
				<LayerStack mark={null} />
			</div>
			<div className="my-0.5 flex min-w-0 flex-1 flex-col rounded-sm border border-[#404040] bg-[#5f5f5f] px-1">
				<div className="flex h-[25px] items-end justify-between text-[11px] text-gray-100">
					<span className="pl-0.5 leading-4">Current layer: 0</span>
					<span className="mb-1 flex h-4 w-[119px] items-center bg-[#666]">
						<input
							type="text"
							aria-label="Search for layer"
							placeholder="Search for layer"
							className="min-w-0 flex-1 bg-transparent leading-4 placeholder:text-[#b4b4b4]"
						/>
						<Icon size={13}>
							<circle cx="6" cy="6" r="4.500" fill="#f4f4f4" stroke="#ccc" />
							<path d="m9 9 6 6" stroke="#ddd" strokeWidth="2.500" />
						</Icon>
					</span>
				</div>
				<div className="mb-1 flex h-[25px] items-center gap-1.5">
					<button type="button" aria-label="New property filter">
						<FolderIcon filter />
					</button>
					<button type="button" aria-label="New group filter">
						<FolderIcon />
					</button>
					<span className="ml-1 h-4 w-px bg-[#4a4a4a]" />
					<button type="button" aria-label="Layer states">
						<LayerStack mark={<path d="M9 6h6v9H9zM10.500 9h3M10.500 12h3" fill="#f2f6fb" stroke="#4e7fbc" />} />
					</button>
					<span className="w-[42px]" />
					<button type="button" aria-label="New layer">
						<LayerStack mark={<path d="m12 5 1 2.500 2.500.5-2 2 .5 3-2-1.500L9.500 13l.5-3-2-2 3-.5z" fill="#f29b38" />} />
					</button>
					<button type="button" aria-label="New frozen layer">
						<LayerStack mark={<path d="M12 6v8M8.500 8l7 4M15.500 8l-7 4" stroke="#8fc4ea" strokeWidth="1.500" />} />
					</button>
					<button type="button" aria-label="Delete layer">
						<LayerStack mark={<path d="m9 7 6 7M15 7l-6 7" stroke="#e3202c" strokeWidth="3" />} />
					</button>
					<button type="button" aria-label="Set current">
						<LayerStack mark={<path d="m7 9 3 3 5-8" stroke="#3aa31e" strokeWidth="3" />} />
					</button>
					<span className="ml-auto flex gap-2 pr-2">
						<button type="button" aria-label="Refresh">
							<Icon size={14}>
								<path d="M3 8a5 5 0 0 1 9-3M13 8a5 5 0 0 1-9 3" stroke="#cfcfcf" strokeWidth="2" />
								<path d="M14 1v5H9zM2 15v-5h5z" fill="#cfcfcf" />
							</Icon>
						</button>
						<button type="button" aria-label="Settings">
							<GearIcon color="#cfcfcf" hollow />
						</button>
					</span>
				</div>
				<div className="flex h-[235px] gap-[3px]">
					<div className="flex w-[186px] shrink-0 flex-col border border-[#686868] text-[11px] text-gray-100">
						<div className="flex h-[17px] items-center justify-between border-b border-[#686868] pl-0.5 pr-1">
							<span>Filters</span>
							<button type="button" aria-label="Collapse filters">
								<DoubleChevron />
							</button>
						</div>
						<div className="flex h-5 items-center pl-1 pt-1">
							<Icon size={9} box={9}>
								<path d="M.5.5h8v8h-8z" fill="#f2f2f2" stroke="#888" />
								<path d="M2 4.500h5" stroke="#1f3d8c" />
							</Icon>
							<Icon size={6} box={6}>
								<path d="M1 3.500h5" stroke="#333" strokeDasharray="1 1" />
							</Icon>
							<Icon size={15}>
								<path d="M3 2h6l-2 2H1zM1 6.500h6l2-2M1 9h6l2-2" fill="#eee" stroke="#eee" />
								<path d="m6 11 3 3 6-5" stroke="#3f9a1c" strokeWidth="2.500" />
							</Icon>
							<span className="ml-0.5 bg-[#f0f0f0] px-0.5 leading-[15px] text-[#222]">All</span>
						</div>
						<div className="flex h-[15px] items-center pl-[25px]">
							<Icon size={11} box={11} className="-mt-2">
								<path d="M1 0v9.500h10" stroke="#333" strokeDasharray="1 1" />
							</Icon>
							<FolderIcon filter />
							<span className="ml-1.5 leading-4">All Used Layers</span>
						</div>
						<div className="mt-auto flex h-[22px] items-center justify-between border-t border-[#686868] pl-px pr-1">
							<label className="flex items-center gap-1">
								<input type="checkbox" className="size-3 appearance-none border border-[#333] bg-white" />
								Invert filter
							</label>
							<button type="button" aria-label="Collapse tree">
								<DoubleChevron />
							</button>
						</div>
					</div>
					<div className="flex min-w-0 flex-1 flex-col justify-between">
						<div className="grid flex-1 items-start bg-linear-to-r from-transparent from-[92px] via-[#4c4c4c] via-[92px] to-transparent to-[93px]">
							<LayerTable />
						</div>
						<div className="flex h-4 items-stretch bg-[#f0f0f0]">
							<button type="button" aria-label="Scroll left" className="flex w-4 items-center justify-center">
								<Icon size={8} box={8}>
									<path d="M6 1 2 4l4 3" stroke="#333" strokeWidth="1.500" />
								</Icon>
							</button>
							<span className="w-[169px] bg-[#cdcdcd]" />
						</div>
					</div>
				</div>
				<p className="pl-0.5 pt-2 text-[11px] leading-5 text-gray-100">All: 2 layers displayed of 2 total layers</p>
			</div>
		</section>
	);
}

/* ---------- select color dialog ---------- */

function ColorGrid({
	digits,
	selected,
	onSelect,
}: {
	digits: number[];
	selected: number;
	onSelect: (index: number) => void;
}) {
	return (
		<div className="grid h-[57px] w-[312px] grid-cols-24 gap-px">
			{digits.map((digit) =>
				Array.from({ length: 24 }, (_, i) => {
					const index = (i + 1) * 10 + digit;
					return (
						<button
							key={index}
							type="button"
							aria-label={`Color ${index}`}
							className="relative"
							style={{ backgroundColor: aciColor(index) }}
							onClick={() => onSelect(index)}
						>
							{index === selected && (
								<span className="absolute -inset-[3px] z-10 border-2 border-black bg-inherit outline outline-white" />
							)}
						</button>
					);
				}),
			)}
		</div>
	);
}

function SwatchRow({ colors }: { colors: string[] }) {
	return (
		<div className="flex w-fit gap-px bg-[#f1f1f1] p-[3px] pl-0.5">
			{colors.map((color) => (
				<button
					key={color}
					type="button"
					aria-label={color}
					className="h-[17px] w-4"
					style={{ backgroundColor: color }}
				/>
			))}
		</div>
	);
}

function SelectColorDialog() {
	const [color, setColor] = useState(52);

	return (
		<div
			role="dialog"
			aria-label="Select Color"
			className="absolute left-[469px] top-[177px] w-[342px] border border-[#2f8fd0] bg-[#f0f0f0] font-['Liberation_Sans'] text-[10px] text-[#222] shadow-lg shadow-black/50"
		>
			<div className="flex h-7 items-center gap-1.5 bg-white px-2 pb-0.5 font-['Open_Sans'] text-[13px]">
				<Icon size={14}>
					<path d="M0 0h16v16H0z" fill="#f4dcd8" />
					<path d="M1 15 6 1h4l5 14h-4l-1-3H6l-1 3z" fill="#b3262d" />
					<path d="m7 9 1-4 1 4z" fill="#f4dcd8" />
				</Icon>
				<span>Select Color</span>
				<button type="button" aria-label="Close" className="ml-auto">
					<Icon size={12} box={12}>
						<path d="m1 1 10 10M11 1 1 11" stroke="#222" />
					</Icon>
				</button>
			</div>
			<div className="px-[5px] pt-[9px]">
				<div className="flex h-[19px] items-end" role="tablist">
					<button
						type="button"
						role="tab"
						aria-selected="true"
						className="relative z-10 -mb-px h-5 w-[93px] border border-b-0 border-[#dcdcdc] bg-white pb-1"
					>
						Index Color
					</button>
					<button
						type="button"
						role="tab"
						aria-selected="false"
						className="h-[17px] w-[89px] border border-b-0 border-l-0 border-[#dcdcdc] pb-0.5"
					>
						True Color
					</button>
					<button
						type="button"
						role="tab"
						aria-selected="false"
						className="h-[17px] w-[89px] border border-b-0 border-l-0 border-[#dcdcdc] pb-0.5"
					>
						Color Books
					</button>
				</div>
				<div className="flex h-[263px] flex-col border border-[#dcdcdc] bg-white px-2">
					<span className="pl-px pt-px leading-[13px]">AutoCAD Color Index (ACI):</span>
					<div className="flex w-[316px] flex-col gap-[7px] bg-[#f4f4f4] px-px py-0.5">
						<ColorGrid digits={[8, 6, 4, 2, 0]} selected={color} onSelect={setColor} />
						<ColorGrid digits={[1, 3, 5, 7, 9]} selected={color} onSelect={setColor} />
					</div>
					<div className="mt-[23px] flex justify-between">
						<div className="flex flex-col gap-px">
							<SwatchRow colors={BASIC_COLORS} />
							<SwatchRow colors={GRAY_COLORS} />
						</div>
						<div className="flex gap-[5px]">
							<button type="button" disabled className="mt-0.5 h-[18px] w-[68px] bg-[#ccc] text-[#808080]">
								By<u>L</u>ayer
							</button>
							<button type="button" disabled className="mt-0.5 h-[18px] w-[68px] bg-[#ccc] text-[#808080]">
								ByBloc<u>k</u>
							</button>
						</div>
					</div>
					<div className="flex justify-between">
						<div className="pt-2.5">
							<label htmlFor="aci" className="block pl-px leading-3">
								Color:
							</label>
							<input
								id="aci"
								type="text"
								value={color}
								onChange={(e) => setColor(Number(e.target.value) || 0)}
								className="block h-5 w-[179px] border border-[#8a8a8a] bg-white px-[3px]"
							/>
						</div>
						{/* previous color sits behind the new one */}
						<div className="relative -mt-[18px] mr-4 h-[61px] w-[63px]">
							<span className="absolute right-0 top-0 h-[34px] w-8 border border-[#b4b4b4] bg-white" />
							<span className="absolute bottom-0 left-0 size-[51px] border border-[#b4b4b4] bg-white p-px">
								<span className="block size-full" style={{ backgroundColor: aciColor(color) }} />
							</span>
						</div>
					</div>
				</div>
				<div className="flex justify-end gap-[5px] py-2 pr-2">
					<button type="button" className="relative h-5 w-[68px] border-2 border-[#2f8fd0] bg-[#e5f1fb]">
						OK
						<svg width="12" height="18" viewBox="0 0 12 18" className="absolute left-9 top-2 z-10" aria-hidden="true">
							<path d="M1 1v14l3-3 2.500 5 2-1L6 11h5z" fill="#fff" stroke="#222" />
						</svg>
					</button>
					<button type="button" className="h-5 w-[68px] border border-[#adadad] bg-[#e1e1e1]">
						Cancel
					</button>
					<button type="button" className="h-5 w-[68px] border border-[#adadad] bg-[#e1e1e1]">
						<u>H</u>elp
					</button>
				</div>
			</div>
		</div>
	);
}

export default function App() {
	return (
		<div className="relative flex h-screen flex-col overflow-hidden bg-black pb-[19px] pt-[18px] font-['Open_Sans','Noto_Sans',sans-serif]">
			<Header />
			<Ribbon />
			<DrawingArea />
			<StatusBar />
			<LayerPalette />
			<SelectColorDialog />
		</div>
	);
}
